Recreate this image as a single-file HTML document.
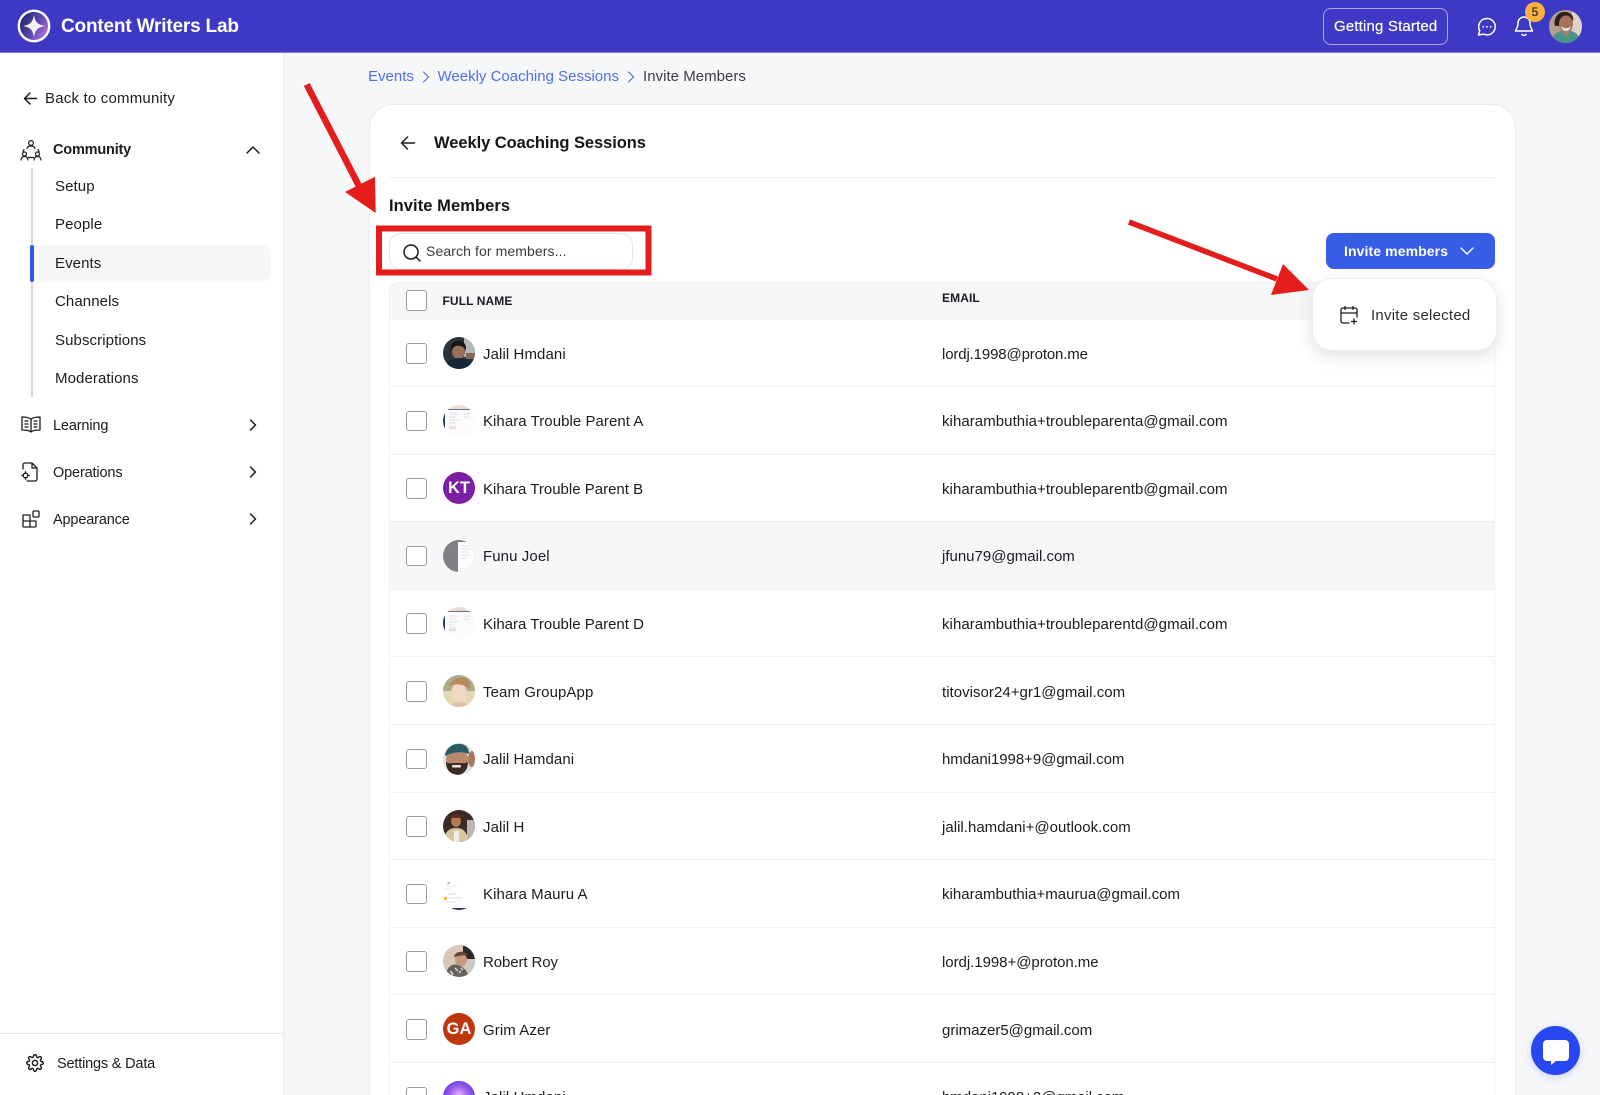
<!DOCTYPE html>
<html lang="en">
<head>
<meta charset="utf-8">
<title>Invite Members</title>
<style>
html,body{margin:0;padding:0;width:1600px;height:1095px;overflow:hidden;background:#f6f7f9}
body{position:relative;font-family:"Liberation Sans",sans-serif;color:#1b1c20;font-size:15px}
.a{position:absolute}
.t{position:absolute;white-space:nowrap;line-height:20px;height:20px}
svg{position:absolute;overflow:visible;display:block}
.s{fill:none;stroke:#1b1c20;stroke-width:1.5;stroke-linecap:round;stroke-linejoin:round}
header{position:absolute;left:0;top:0;width:1600px;height:51.5px;background:#3d39c4;border-bottom:1px solid #7d7ad8;box-sizing:content-box}
aside{position:absolute;left:0;top:52.5px;width:283px;height:1042.5px;background:#fff;border-right:1px solid #eceef1}
.nav{letter-spacing:.09px}
.nav2{font-size:14.5px;letter-spacing:-.15px}
.card{position:absolute;left:369px;top:104px;width:1147px;height:991px;background:#fff;border:1px solid #e9ebee;border-bottom:0;border-radius:24px 24px 0 0;box-sizing:border-box}
.row{position:absolute;left:389px;width:1106px;height:67.6px;border-bottom:1px solid #f0f1f3;box-sizing:border-box;background:#fff;border-left:1px solid #f2f3f5;border-right:1px solid #f2f3f5}
.cb{position:absolute;left:16px;top:23.5px;width:20.5px;height:20.5px;border:1.5px solid #9c9c9c;border-radius:3px;background:#fff;box-sizing:border-box}
.av{position:absolute;left:53px;top:17.5px;width:32px;height:32px;border-radius:50%;overflow:hidden}
.av svg{left:0;top:0}
.ini{display:block;color:#fff;font-weight:700;font-size:16.5px;line-height:32px;text-align:center}
.nm{left:93px;top:25px;letter-spacing:.09px}
.em{left:552px;top:25px;letter-spacing:.06px}
</style>
</head>
<body>

<header>
  <svg width="36" height="36" style="left:16px;top:8px" viewBox="0 0 36 36">
    <defs><linearGradient id="lg" x1="0" y1="0.2" x2="1" y2="0.8"><stop offset="0" stop-color="#182463"/><stop offset=".5" stop-color="#5545ae"/><stop offset="1" stop-color="#c377d6"/></linearGradient></defs>
    <circle cx="18" cy="18" r="15.2" fill="url(#lg)" stroke="#fff" stroke-width="2.4"/>
    <path d="M18 7C19.500 14.500 21.500 16.500 29 18 21.500 19.500 19.500 21.500 18 29 16.500 21.500 14.500 19.500 7 18 14.500 16.500 16.500 14.500 18 7Z" fill="#f6f2fc"/>
  </svg>
  <div class="t" style="left:61px;top:16px;font-size:19px;font-weight:700;color:#fff;line-height:22px;height:22px;letter-spacing:-.18px">Content Writers Lab</div>
  <div class="a" style="left:1323px;top:8px;width:125px;height:37px;border:1px solid #a9a7e4;border-radius:8px;box-sizing:border-box"></div>
  <div class="t" style="left:1334px;top:16.500px;color:#fff;font-size:15px;letter-spacing:.17px;-webkit-text-stroke:.2px #fff">Getting Started</div>
  <svg width="20" height="20" style="left:1477px;top:17px" viewBox="0 0 20 20"><path d="M10 1.500a8.200 8.200 0 0 1 0 16.400c-1.300 0-2.500-.3-3.500-.8L1.500 18l1.200-4.300A8.200 8.200 0 0 1 10 1.500Z" fill="none" stroke="#fff" stroke-width="1.500" stroke-linejoin="round"/><circle cx="6.300" cy="9.800" r=".9" fill="#fff"/><circle cx="10" cy="9.800" r=".9" fill="#fff"/><circle cx="13.700" cy="9.800" r=".9" fill="#fff"/></svg>
  <svg width="20" height="22" style="left:1513.500px;top:14.500px" viewBox="0 0 20 22"><path d="M10 2a6 6 0 0 0-6 6c0 5-2.500 7-2.500 8h17c0-1-2.500-3-2.500-8a6 6 0 0 0-6-6Z" fill="none" stroke="#fff" stroke-width="1.500" stroke-linejoin="round"/><path d="M8 19.500c1 1.200 3 1.200 4 0" fill="none" stroke="#fff" stroke-width="1.500" stroke-linecap="round"/></svg>
  <div class="a" style="left:1525px;top:2px;width:20px;height:20px;border-radius:50%;background:#fbb03f;color:#2a2a2a;font-size:12px;line-height:20px;text-align:center;-webkit-text-stroke:.2px #2a2a2a">5</div>
  <div class="a" style="left:1549px;top:10px;width:33px;height:33px;border-radius:50%;overflow:hidden">
    <svg width="33" height="33" viewBox="0 0 33 33"><rect width="33" height="33" fill="#b5a08f"/><rect x="23" width="10" height="33" fill="#ddd3c8"/><path d="M6 16c-2-9 4-15 11-14 6 1 8 5 7 9l-4-3c-5 2-10 2-10 8Z" fill="#2e211c"/><ellipse cx="17" cy="14" rx="7" ry="8.500" fill="#a5735a"/><path d="M12 16c3 3 7 3 10 0-1 4-3 5-5 5s-4-1-5-5Z" fill="#f0e5dc"/><path d="M3 33c0-9 6-13 14-12 8-1 14 3 14 12Z" fill="#4a9484"/><path d="M13 21l4 6 4-6Z" fill="#b07e64"/></svg>
  </div>
</header>

<aside></aside>

<svg width="14" height="13" style="left:23px;top:91.500px" viewBox="0 0 14 13"><path class="s" d="M13.500 6.500H1.500M7 1 1.500 6.500 7 12"/></svg>
<div class="t nav" style="left:45px;top:89px;letter-spacing:.2px">Back to community</div>

<svg width="22" height="22" style="left:20px;top:139px" viewBox="0 0 22 22"><g class="s" style="stroke-width:1.200"><circle cx="11" cy="4" r="2.400"/><path d="M7 9.500c.5-1.800 2-2.500 4-2.500s3.500.7 4 2.500"/><circle cx="4.500" cy="15" r="2"/><circle cx="17.500" cy="15" r="2"/><path d="M1 21c.3-2.300 1.700-3.500 3.500-3.500S7.700 18.700 8 21M14 21c.3-2.300 1.700-3.500 3.500-3.500S20.700 18.700 21 21M4 10.500 3 12.500M18 10.500l1 2M8.500 18.500h5"/></g></svg>
<div class="t" style="left:53px;top:140px;font-weight:700;font-size:14.5px;letter-spacing:-.19px">Community</div>
<svg width="14" height="8" style="left:246px;top:146px" viewBox="0 0 14 8"><path class="s" d="M1 7 7 1l6 6"/></svg>

<div class="a" style="left:31px;top:168px;width:1.500px;height:229px;background:#d9d6d6"></div>
<div class="a" style="left:33px;top:245px;width:238px;height:37px;background:#f6f7f9;border-radius:0 10px 10px 0"></div>
<div class="a" style="left:30px;top:245px;width:4px;height:37px;background:#2f5be7;border-radius:3px"></div>
<div class="t nav" style="left:55px;top:176.500px">Setup</div>
<div class="t nav" style="left:55px;top:215px">People</div>
<div class="t nav" style="left:55px;top:253.500px">Events</div>
<div class="t nav" style="left:55px;top:292px">Channels</div>
<div class="t nav" style="left:55px;top:330.500px">Subscriptions</div>
<div class="t nav" style="left:55px;top:369px">Moderations</div>

<svg width="20" height="18" style="left:21px;top:416px" viewBox="0 0 20 18"><g class="s" style="stroke-width:1.300"><path d="M10 3.500C8.500 1.500 5 1 1 1v13c4 0 7.500.3 9 2 1.500-1.700 5-2 9-2V1c-4 0-7.500.5-9 2.500ZM10 3.500V16"/><path d="M4 5h3M4 8h3M4 11h3M13 5h3M13 8h3M13 11h3"/></g></svg>
<div class="t nav2" style="left:53px;top:416px">Learning</div>
<svg width="8" height="12" style="left:249px;top:419px" viewBox="0 0 8 12"><path class="s" d="M1.500 1 6.500 6l-5 5"/></svg>

<svg width="18" height="20" style="left:21px;top:462px" viewBox="0 0 18 20"><g class="s" style="stroke-width:1.300"><path d="M2 7V3a2 2 0 0 1 2-2h7l5 5v11a2 2 0 0 1-2 2H6M11 1v5h5"/><circle cx="4.500" cy="13.500" r="2.300"/><path d="M4.500 9.800v1.200M4.500 16v1.200M.8 13.500h1.200M7 13.500h1.200"/></g></svg>
<div class="t nav2" style="left:53px;top:463px">Operations</div>
<svg width="8" height="12" style="left:249px;top:466px" viewBox="0 0 8 12"><path class="s" d="M1.500 1 6.500 6l-5 5"/></svg>

<svg width="18" height="18" style="left:22px;top:510px" viewBox="0 0 18 18"><g class="s" style="stroke-width:1.300"><path d="M1 5h7v12H2a1 1 0 0 1-1-1ZM1 11h13v5a1 1 0 0 1-1 1H8"/><rect x="11" y="1" width="6" height="6" rx="1"/></g></svg>
<div class="t nav2" style="left:53px;top:509.500px">Appearance</div>
<svg width="8" height="12" style="left:249px;top:513px" viewBox="0 0 8 12"><path class="s" d="M1.500 1 6.500 6l-5 5"/></svg>

<div class="a" style="left:0;top:1033px;width:283px;height:1px;background:#e4e5e7"></div>
<svg width="18" height="18" style="left:26px;top:1054px" viewBox="0 0 24 24"><path class="s" style="stroke-width:1.900" d="M12 15.500a3.500 3.500 0 1 0 0-7 3.500 3.500 0 0 0 0 7Z"/><path class="s" style="stroke-width:1.900" d="M19.400 15a1.700 1.700 0 0 0 .3 1.800l.1.100a2 2 0 1 1-2.800 2.800l-.1-.1a1.700 1.700 0 0 0-2.900 1.200v.2a2 2 0 1 1-4 0v-.1a1.700 1.700 0 0 0-2.900-1.200l-.1.100a2 2 0 1 1-2.800-2.800l.1-.1a1.700 1.700 0 0 0-1.200-2.900H3a2 2 0 1 1 0-4h.1a1.700 1.700 0 0 0 1.200-2.900l-.1-.1a2 2 0 1 1 2.800-2.800l.1.100a1.700 1.700 0 0 0 1.900.3H9a1.700 1.700 0 0 0 1-1.500V3a2 2 0 1 1 4 0v.1a1.700 1.700 0 0 0 2.900 1.200l.1-.1a2 2 0 1 1 2.800 2.800l-.1.100a1.700 1.700 0 0 0-.3 1.900V9a1.700 1.700 0 0 0 1.500 1H21a2 2 0 1 1 0 4h-.1a1.700 1.700 0 0 0-1.500 1Z"/></svg>
<div class="t" style="left:57px;top:1054px;font-size:14.5px;letter-spacing:-.18px">Settings &amp; Data</div>

<div class="t" style="left:368px;top:67px;color:#4d6ff0">Events</div>
<svg width="8" height="12" style="left:422px;top:71px" viewBox="0 0 8 12"><path d="M1.500 1 6.500 6l-5 5" fill="none" stroke="#5b6fd0" stroke-width="1.200" stroke-linecap="round"/></svg>
<div class="t" style="left:437.500px;top:67px;color:#4d6ff0">Weekly Coaching Sessions</div>
<svg width="8" height="12" style="left:627px;top:71px" viewBox="0 0 8 12"><path d="M1.500 1 6.500 6l-5 5" fill="none" stroke="#5b6fd0" stroke-width="1.200" stroke-linecap="round"/></svg>
<div class="t" style="left:643px;top:67px;color:#3b3d42;letter-spacing:.03px">Invite Members</div>

<div class="card"></div>
<svg width="15" height="14" style="left:400px;top:136px" viewBox="0 0 15 14"><path class="s" d="M14.500 7H1.500M7.500 1 1.500 7l6 6"/></svg>
<div class="t" style="left:434px;top:133px;font-size:16.5px;font-weight:700;color:#141519;letter-spacing:-.06px">Weekly Coaching Sessions</div>
<div class="a" style="left:389px;top:177px;width:1106px;height:1px;background:#eef0f2"></div>
<div class="t" style="left:389px;top:195.500px;font-size:16.5px;font-weight:700;color:#141519;letter-spacing:.07px">Invite Members</div>

<div class="a" style="left:389px;top:233px;width:244px;height:37px;border:1px solid #e6e7ea;border-radius:12px;box-sizing:border-box;background:#fff"></div>
<svg width="18" height="18" style="left:403px;top:243.500px" viewBox="0 0 18 18"><circle class="s" cx="8" cy="8" r="7"/><path class="s" d="M13.300 13.300 17 17"/></svg>
<div class="t" style="left:426px;top:240.500px;font-size:14px;color:#3a3b40;letter-spacing:.1px">Search for members...</div>

<div class="a" style="left:389px;top:282px;width:1106px;height:38px;background:#f6f7f9;border:1px solid #f0f1f3;border-bottom:0;border-radius:10px 10px 0 0;box-sizing:border-box"></div>
<div class="cb" style="left:406px;top:290px"></div>
<div class="t" style="left:442.500px;top:291px;font-size:12px;font-weight:700;letter-spacing:.1px">FULL NAME</div>
<div class="t" style="left:942px;top:287.500px;font-size:12px;font-weight:700;letter-spacing:.1px">EMAIL</div>

<div class="row" style="top:319.500px">
  <div class="cb"></div>
  <div class="av"><svg width="32" height="32" viewBox="0 0 32 32"><rect width="32" height="32" fill="#2a343c"/><rect x="21" width="11" height="20" fill="#b4b8ba"/><rect x="23" y="16" width="9" height="6" fill="#7d6a5d"/><path d="M8 11c0-5 4-7 8-7s7 3 7 7l-1 4H9Z" fill="#14161a"/><ellipse cx="15.500" cy="15" rx="6.500" ry="7" fill="#9a7158"/><path d="M9 11c3-3 9-3 13 0l-1-5c-4-2-9-2-11 0Z" fill="#14161a"/><path d="M3 32c0-8 6-11 13-11s13 3 13 11Z" fill="#15283a"/></svg></div>
  <div class="t nm">Jalil Hmdani</div>
  <div class="t em" style="letter-spacing:-.14px">lordj.1998@proton.me</div>
</div>

<div class="row" style="top:387.100px">
  <div class="cb"></div>
  <div class="av"><svg width="32" height="32" viewBox="0 0 32 32"><rect width="32" height="32" fill="#fbfbfc"/><rect width="32" height="4" fill="#f0dcd3"/><rect y="4" width="32" height="1" fill="#6a7390"/><rect width="2" height="20" y="6" fill="#26365e"/><path d="M6 9h9M6 12h7M6 15h10M6 18h6M6 21h8M21 9h7M21 12h5" stroke="#dcdfe5" stroke-width="1"/><path d="M6 23h7" stroke="#eeb0aa" stroke-width="1"/></svg></div>
  <div class="t nm" style="letter-spacing:.05px">Kihara Trouble Parent A</div>
  <div class="t em">kiharambuthia+troubleparenta@gmail.com</div>
</div>

<div class="row" style="top:454.700px">
  <div class="cb"></div>
  <div class="av" style="background:#7b1fa2"><span class="ini">KT</span></div>
  <div class="t nm" style="letter-spacing:0">Kihara Trouble Parent B</div>
  <div class="t em">kiharambuthia+troubleparentb@gmail.com</div>
</div>

<div class="row" style="top:522.300px;background:#f6f7f9">
  <div class="cb"></div>
  <div class="av"><svg width="32" height="32" viewBox="0 0 32 32"><rect width="32" height="32" fill="#808184"/><rect x="15" y="2" width="17" height="30" fill="#fdfdfd"/><path d="M18 6h8M18 9h10M18 12h7M18 15h9M18 18h6" stroke="#dcdfe4" stroke-width="1"/></svg></div>
  <div class="t nm">Funu Joel</div>
  <div class="t em" style="letter-spacing:0">jfunu79@gmail.com</div>
</div>

<div class="row" style="top:589.900px">
  <div class="cb"></div>
  <div class="av"><svg width="32" height="32" viewBox="0 0 32 32"><rect width="32" height="32" fill="#fbfbfc"/><rect width="32" height="4" fill="#f0dcd3"/><rect y="4" width="32" height="1" fill="#6a7390"/><rect width="2" height="20" y="6" fill="#26365e"/><path d="M6 9h9M6 12h7M6 15h10M6 18h6M6 21h8M21 9h7M21 12h5" stroke="#dcdfe5" stroke-width="1"/><path d="M6 23h7" stroke="#eeb0aa" stroke-width="1"/></svg></div>
  <div class="t nm" style="letter-spacing:0">Kihara Trouble Parent D</div>
  <div class="t em">kiharambuthia+troubleparentd@gmail.com</div>
</div>

<div class="row" style="top:657.500px">
  <div class="cb"></div>
  <div class="av"><svg width="32" height="32" viewBox="0 0 32 32"><rect width="32" height="32" fill="#a9ad88"/><rect y="16" width="32" height="16" fill="#e3d9b4"/><ellipse cx="16" cy="18" rx="8" ry="10" fill="#f2d8c4"/><path d="M6 11C8 5 15 1 22 3c6 2 6 7 4 11-5-5-13-6-20-3Z" fill="#b98a5f"/><path d="M7 32c1-4 5-5 9-5s8 1 9 5Z" fill="#e8bda5"/></svg></div>
  <div class="t nm">Team GroupApp</div>
  <div class="t em" style="letter-spacing:.03px">titovisor24+gr1@gmail.com</div>
</div>

<div class="row" style="top:725.100px">
  <div class="cb"></div>
  <div class="av"><svg width="32" height="32" viewBox="0 0 32 32"><rect width="32" height="32" fill="#e0e2de"/><ellipse cx="29" cy="16" rx="4" ry="8" fill="#a8775c"/><ellipse cx="14" cy="17" rx="11" ry="13" fill="#b78a6e"/><path d="M2 13C3 4 11 0 18 1c6 1 8 5 8 10-7-3-16-2-24 2Z" fill="#2a5a66"/><path d="M3 19c3 2 6 1 11 1s8 1 11-1c0 8-5 13-11 13S3 27 3 19Z" fill="#3a2a22"/><rect x="9" y="22" width="9" height="2.500" rx="1" fill="#f0e8e0"/></svg></div>
  <div class="t nm">Jalil Hamdani</div>
  <div class="t em" style="letter-spacing:-.04px">hmdani1998+9@gmail.com</div>
</div>

<div class="row" style="top:792.700px">
  <div class="cb"></div>
  <div class="av"><svg width="32" height="32" viewBox="0 0 32 32"><rect width="32" height="32" fill="#3a2c24"/><rect x="24" y="10" width="8" height="22" fill="#bdb6b0"/><ellipse cx="13" cy="11" rx="5" ry="6" fill="#b07a52"/><path d="M8 8c1-4 9-5 10 0Z" fill="#6e2a20"/><path d="M1 32c0-10 5-14 12-14s12 4 12 14Z" fill="#dcc59e"/><rect x="11" y="21" width="5" height="11" fill="#f2efe8"/></svg></div>
  <div class="t nm">Jalil H</div>
  <div class="t em" style="letter-spacing:.02px">jalil.hamdani+@outlook.com</div>
</div>

<div class="row" style="top:860.300px">
  <div class="cb"></div>
  <div class="av"><svg width="32" height="32" viewBox="0 0 32 32"><rect width="32" height="32" fill="#fff"/><path d="M2 5h5" stroke="#a877d0" stroke-width="1.200"/><path d="M2 8h12M2 11h6" stroke="#e6e8eb" stroke-width="1"/><rect x="1" y="19" width="3" height="3" fill="#f7b64c"/><path d="M5 16h8M5 20h14M3 24h10" stroke="#dcdee3" stroke-width="1"/><rect y="30" width="32" height="2" fill="#2c2550"/></svg></div>
  <div class="t nm">Kihara Mauru A</div>
  <div class="t em" style="letter-spacing:.02px">kiharambuthia+maurua@gmail.com</div>
</div>

<div class="row" style="top:927.900px">
  <div class="cb"></div>
  <div class="av"><svg width="32" height="32" viewBox="0 0 32 32"><rect width="32" height="32" fill="#dcc6b8"/><rect x="20" width="12" height="14" fill="#2c2826"/><rect x="24" y="14" width="8" height="18" fill="#c8c9c2"/><ellipse cx="18" cy="15" rx="6" ry="6.500" fill="#c79a7e"/><path d="M11 12c1-6 10-7 14-2-5 0-9 1-14 2Z" fill="#5c4632"/><path d="M3 32c0-10 6-14 12-12s10 6 10 12Z" fill="#65635c"/><path d="M7 26l3 3M12 23l3 3M16 28l2-2M8 31l2-2M18 23l2 2" stroke="#d8d8d2" stroke-width="1.500"/></svg></div>
  <div class="t nm" style="letter-spacing:-.1px">Robert Roy</div>
  <div class="t em" style="letter-spacing:-.04px">lordj.1998+@proton.me</div>
</div>

<div class="row" style="top:995.500px">
  <div class="cb"></div>
  <div class="av" style="background:#bf360c"><span class="ini">GA</span></div>
  <div class="t nm">Grim Azer</div>
  <div class="t em" style="letter-spacing:0">grimazer5@gmail.com</div>
</div>

<div class="row" style="top:1063.100px;height:31.900px;border-bottom:0;overflow:hidden">
  <div class="cb"></div>
  <div class="av" style="background:radial-gradient(circle at 50% 45%,#eab6f0 0%,#a864ea 35%,#5c3be8 70%,#2a1fc8 100%)"></div>
  <div class="t nm">Jalil Hmdani</div>
  <div class="t em" style="letter-spacing:-.04px">hmdani1998+2@gmail.com</div>
</div>

<div class="a" style="left:1326px;top:233px;width:169px;height:36px;background:#375de7;border-radius:8px"></div>
<div class="t" style="left:1344px;top:241px;color:#fff;font-weight:700;font-size:14px;letter-spacing:.1px">Invite members</div>
<svg width="14" height="8" style="left:1460px;top:247px" viewBox="0 0 14 8"><path d="M1 1l6 6 6-6" fill="none" stroke="#fff" stroke-width="1.300" stroke-linecap="round" stroke-linejoin="round"/></svg>

<div class="a" style="left:1312px;top:278px;width:185px;height:73px;background:#fff;border:1px solid #eceef0;border-radius:20px;box-sizing:border-box;box-shadow:0 6px 16px rgba(30,35,50,.13)"></div>
<svg width="18" height="18" style="left:1340px;top:306px" viewBox="0 0 18 18"><g class="s" style="stroke-width:1.300"><path d="M9 17H3a2 2 0 0 1-2-2V4a2 2 0 0 1 2-2h12a2 2 0 0 1 2 2v7M1 7h16M5 .5v3M13 .5v3M14 13v5M11.500 15.500h5"/></g></svg>
<div class="t" style="left:1371px;top:306px;color:#2b2c30;letter-spacing:.24px">Invite selected</div>

<svg width="1600" height="1095" style="left:0;top:0;pointer-events:none" viewBox="0 0 1600 1095">
  <path d="M306.700 84.500 359 186" stroke="#e51c1c" stroke-width="6.500" fill="none"/>
  <path d="M345 192 375 176.700 375.700 213Z" fill="#e51c1c"/>
  <path d="M1129 222 1277 279" stroke="#e51c1c" stroke-width="5.500" fill="none"/>
  <path d="M1283 264 1271 295 1309 290Z" fill="#e51c1c"/>
  <path d="M379 228.500H648.500V272.500H379Z" fill="none" stroke="#e51c1c" stroke-width="6"/>
</svg>

<div class="a" style="left:1530.500px;top:1025.500px;width:49px;height:49px;border-radius:50%;background:#2847f0;box-shadow:0 2px 8px rgba(40,70,240,.2)"></div>
<svg width="26" height="25" style="left:1542.500px;top:1039.500px" viewBox="0 0 26 25"><path d="M4 0h18a4 4 0 0 1 4 4v13a4 4 0 0 1-4 4H13l-5 4v-4H4a4 4 0 0 1-4-4V4a4 4 0 0 1 4-4Z" fill="#fff"/></svg>

</body>
</html>
